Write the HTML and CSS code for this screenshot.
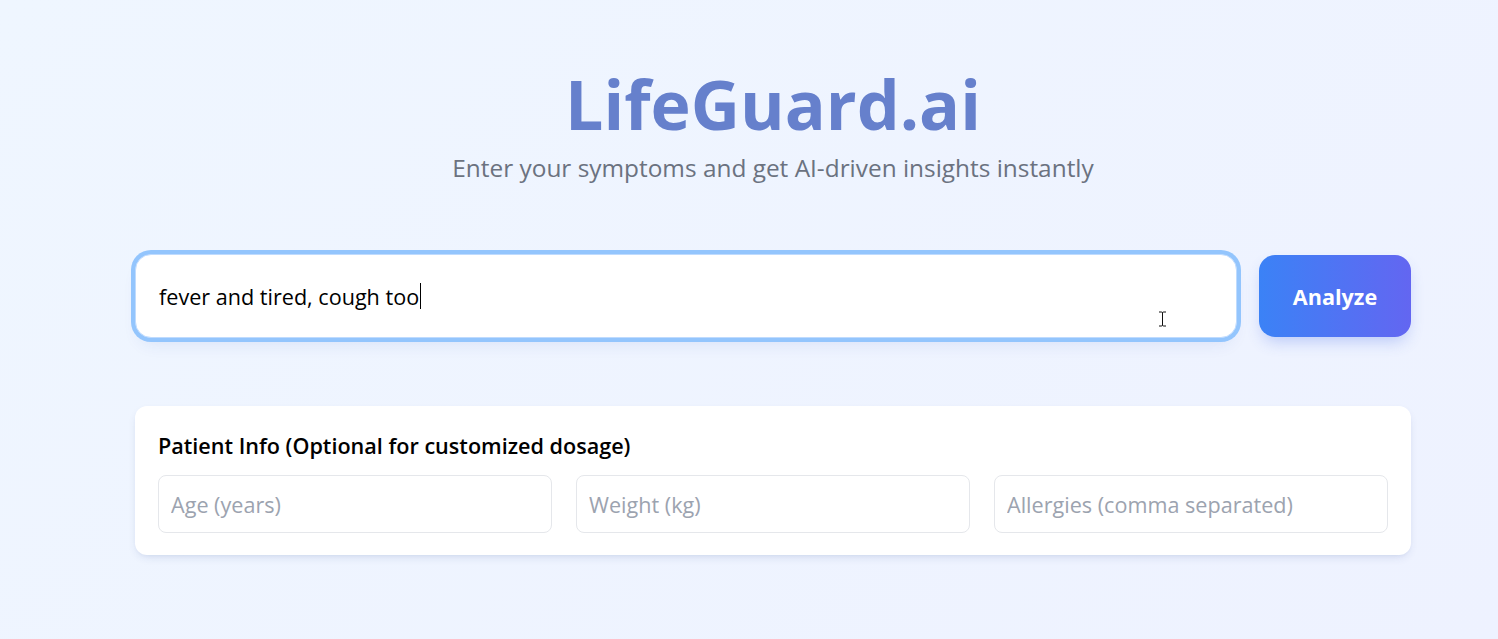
FILE: index.html
```html
<!DOCTYPE html>
<html lang="en">
<head>
<meta charset="utf-8">
<title>LifeGuard.ai</title>
<link rel="stylesheet" href="styles.css">
</head>
<body>
<main class="container">
  <header class="hero">
    <h1 class="title">LifeGuard.ai</h1>
    <p class="subtitle">Enter your symptoms and get AI-driven insights instantly</p>
  </header>

  <section class="search-row">
    <div class="symptom-box">
      <span class="symptom-text">fever and tired, cough too</span><span class="caret"></span>
      <svg class="ibeam" width="9" height="16" viewBox="0 0 9 16" aria-hidden="true">
        <path d="M1 1h2.5c.6 0 1 .4 1 1v12c0 .6-.4 1-1 1H1M8 1H5.5c-.6 0-1 .4-1 1v12c0 .6.4 1 1 1H8" fill="none" stroke="#111" stroke-width="1"/>
      </svg>
    </div>
    <button class="analyze-btn" type="button">Analyze</button>
  </section>

  <section class="card">
    <h2 class="card-title">Patient Info (Optional for customized dosage)</h2>
    <div class="fields">
      <input class="field" type="text" placeholder="Age (years)">
      <input class="field" type="text" placeholder="Weight (kg)">
      <input class="field" type="text" placeholder="Allergies (comma separated)">
    </div>
  </section>
</main>
</body>
</html>
```
FILE: styles.css
```css
* { box-sizing: border-box; }

html, body { height: 100%; }

body {
  margin: 0;
  min-height: 100vh;
  background: linear-gradient(135deg, #eff6ff 0%, #eef2ff 100%);
  font-family: "Open Sans", "Noto Sans", sans-serif;
  color: #111827;
  overflow: hidden;
}

.container {
  width: 1276px;
  margin-left: 135px;
  padding-top: 64px;
}

.hero {
  text-align: center;
}

.title {
  margin: 0;
  font-size: 68px;
  line-height: 80px;
  font-weight: 700;
  color: #6680cc;
}

.subtitle {
  margin: 8px 0 0;
  font-size: 24.4px;
  line-height: 32px;
  color: #6b7280;
}

.search-row {
  margin-top: 70px;
  display: flex;
  align-items: center;
  gap: 22px;
}

.symptom-box {
  position: relative;
  flex: 1;
  height: 84px;
  display: flex;
  align-items: center;
  padding-left: 23px;
  background: #fff;
  border: 1px solid #bfdbfe;
  border-radius: 16px;
  box-shadow: 0 0 0 4px #93c5fd, 0 10px 18px -6px rgba(30, 64, 175, 0.12);
  font-size: 21.6px;
  color: #000;
}

.caret {
  display: inline-block;
  width: 1px;
  height: 26px;
  background: #000;
  margin-left: 1px;
}

.ibeam {
  position: absolute;
  left: 1022px;
  top: 56px;
}

.analyze-btn {
  width: 152px;
  height: 82px;
  border: none;
  border-radius: 16px;
  background: linear-gradient(90deg, #3b82f6 0%, #6366f1 100%);
  color: #fff;
  font-family: "Open Sans", "Noto Sans", sans-serif;
  font-size: 21.6px;
  font-weight: 700;
  box-shadow: 0 8px 16px -4px rgba(59, 100, 230, 0.3);
  cursor: pointer;
}

.card {
  margin-top: 68px;
  background: #fff;
  border-radius: 12px;
  padding: 25px 23px 22px;
  box-shadow: 0 4px 10px -2px rgba(30, 58, 138, 0.12), 0 2px 4px -2px rgba(30, 58, 138, 0.08);
}

.card-title {
  margin: 0 0 14px;
  font-size: 21.6px;
  line-height: 30px;
  font-weight: 600;
  color: #000;
}

.fields {
  display: grid;
  grid-template-columns: repeat(3, 1fr);
  gap: 24px;
}

.field {
  height: 58px;
  padding: 0 12px;
  border: 1px solid #e5e7eb;
  border-radius: 8px;
  font-family: "Open Sans", "Noto Sans", sans-serif;
  font-size: 21.6px;
  color: #111827;
  background: #fff;
  outline: none;
}

.field::placeholder {
  color: #9ca3af;
}
```
